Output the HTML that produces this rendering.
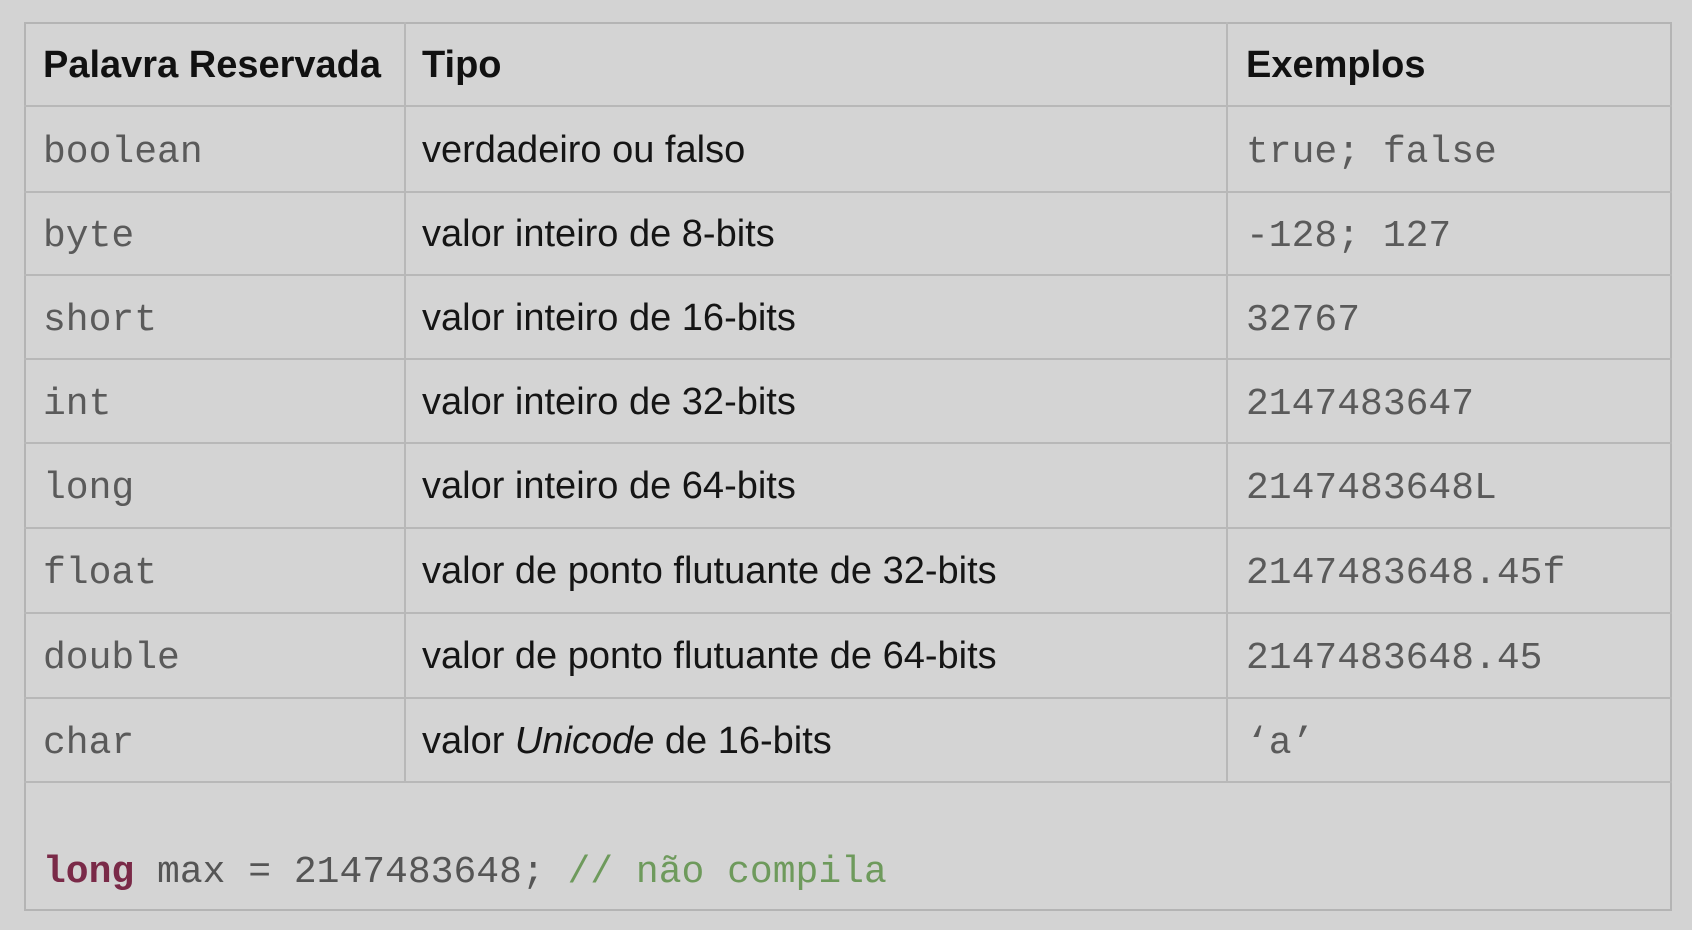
<!DOCTYPE html>
<html><head><meta charset="utf-8"><style>
body{margin:0;width:1692px;height:930px;background:#d3d3d3;position:relative;overflow:hidden;font-family:"Liberation Sans",sans-serif}
.box{position:absolute;left:24px;top:22px;width:1648px;height:889px;border:2px solid #b4b4b4;box-sizing:border-box;background:#d4d4d4}
.h{position:absolute;height:2px;background:#b8b8b8;left:24px;width:1648px}
.v{position:absolute;width:2px;background:#b8b8b8;top:22px;height:761px}
.t{position:absolute;white-space:nowrap;line-height:1}
.b{font-weight:bold;font-size:38px;color:#111}
.s{font-size:38px;color:#151515}
.m{font-family:"Liberation Mono",monospace;font-size:38px;color:#5a5a5a}
.code{position:absolute;left:43px;top:851px;font-family:"Liberation Mono",monospace;font-size:38px;white-space:nowrap;color:#555}
</style></head><body>
<div class="box"></div>
<div class="h" style="top:105px"></div>
<div class="h" style="top:191px"></div>
<div class="h" style="top:274px"></div>
<div class="h" style="top:358px"></div>
<div class="h" style="top:442px"></div>
<div class="h" style="top:527px"></div>
<div class="h" style="top:612px"></div>
<div class="h" style="top:697px"></div>
<div class="h" style="top:781px"></div>
<div class="v" style="left:404px"></div>
<div class="v" style="left:1226px"></div>

<div class="t b" style="left:43px;top:46px">Palavra Reservada</div>
<div class="t b" style="left:422px;top:46px">Tipo</div>
<div class="t b" style="left:1246px;top:46px">Exemplos</div>

<div class="t m" style="left:43px;top:134px">boolean</div>
<div class="t s" style="left:422px;top:131px">verdadeiro ou falso</div>
<div class="t m" style="left:1246px;top:134px">true; false</div>

<div class="t m" style="left:43px;top:218px">byte</div>
<div class="t s" style="left:422px;top:215px">valor inteiro de 8-bits</div>
<div class="t m" style="left:1246px;top:218px">-128; 127</div>

<div class="t m" style="left:43px;top:302px">short</div>
<div class="t s" style="left:422px;top:299px">valor inteiro de 16-bits</div>
<div class="t m" style="left:1246px;top:302px">32767</div>

<div class="t m" style="left:43px;top:386px">int</div>
<div class="t s" style="left:422px;top:383px">valor inteiro de 32-bits</div>
<div class="t m" style="left:1246px;top:386px">2147483647</div>

<div class="t m" style="left:43px;top:470px">long</div>
<div class="t s" style="left:422px;top:467px">valor inteiro de 64-bits</div>
<div class="t m" style="left:1246px;top:470px">2147483648L</div>

<div class="t m" style="left:43px;top:555px">float</div>
<div class="t s" style="left:422px;top:552px">valor de ponto flutuante de 32-bits</div>
<div class="t m" style="left:1246px;top:555px">2147483648.45f</div>

<div class="t m" style="left:43px;top:640px">double</div>
<div class="t s" style="left:422px;top:637px">valor de ponto flutuante de 64-bits</div>
<div class="t m" style="left:1246px;top:640px">2147483648.45</div>

<div class="t m" style="left:43px;top:725px">char</div>
<div class="t s" style="left:422px;top:722px">valor <i>Unicode</i> de 16-bits</div>
<div class="t m" style="left:1246px;top:725px">‘a’</div>

<div class="code"><b style="color:#7a2a48">long</b> max = 2147483648; <span style="color:#6e9a5c">// não compila</span></div>
</body></html>
